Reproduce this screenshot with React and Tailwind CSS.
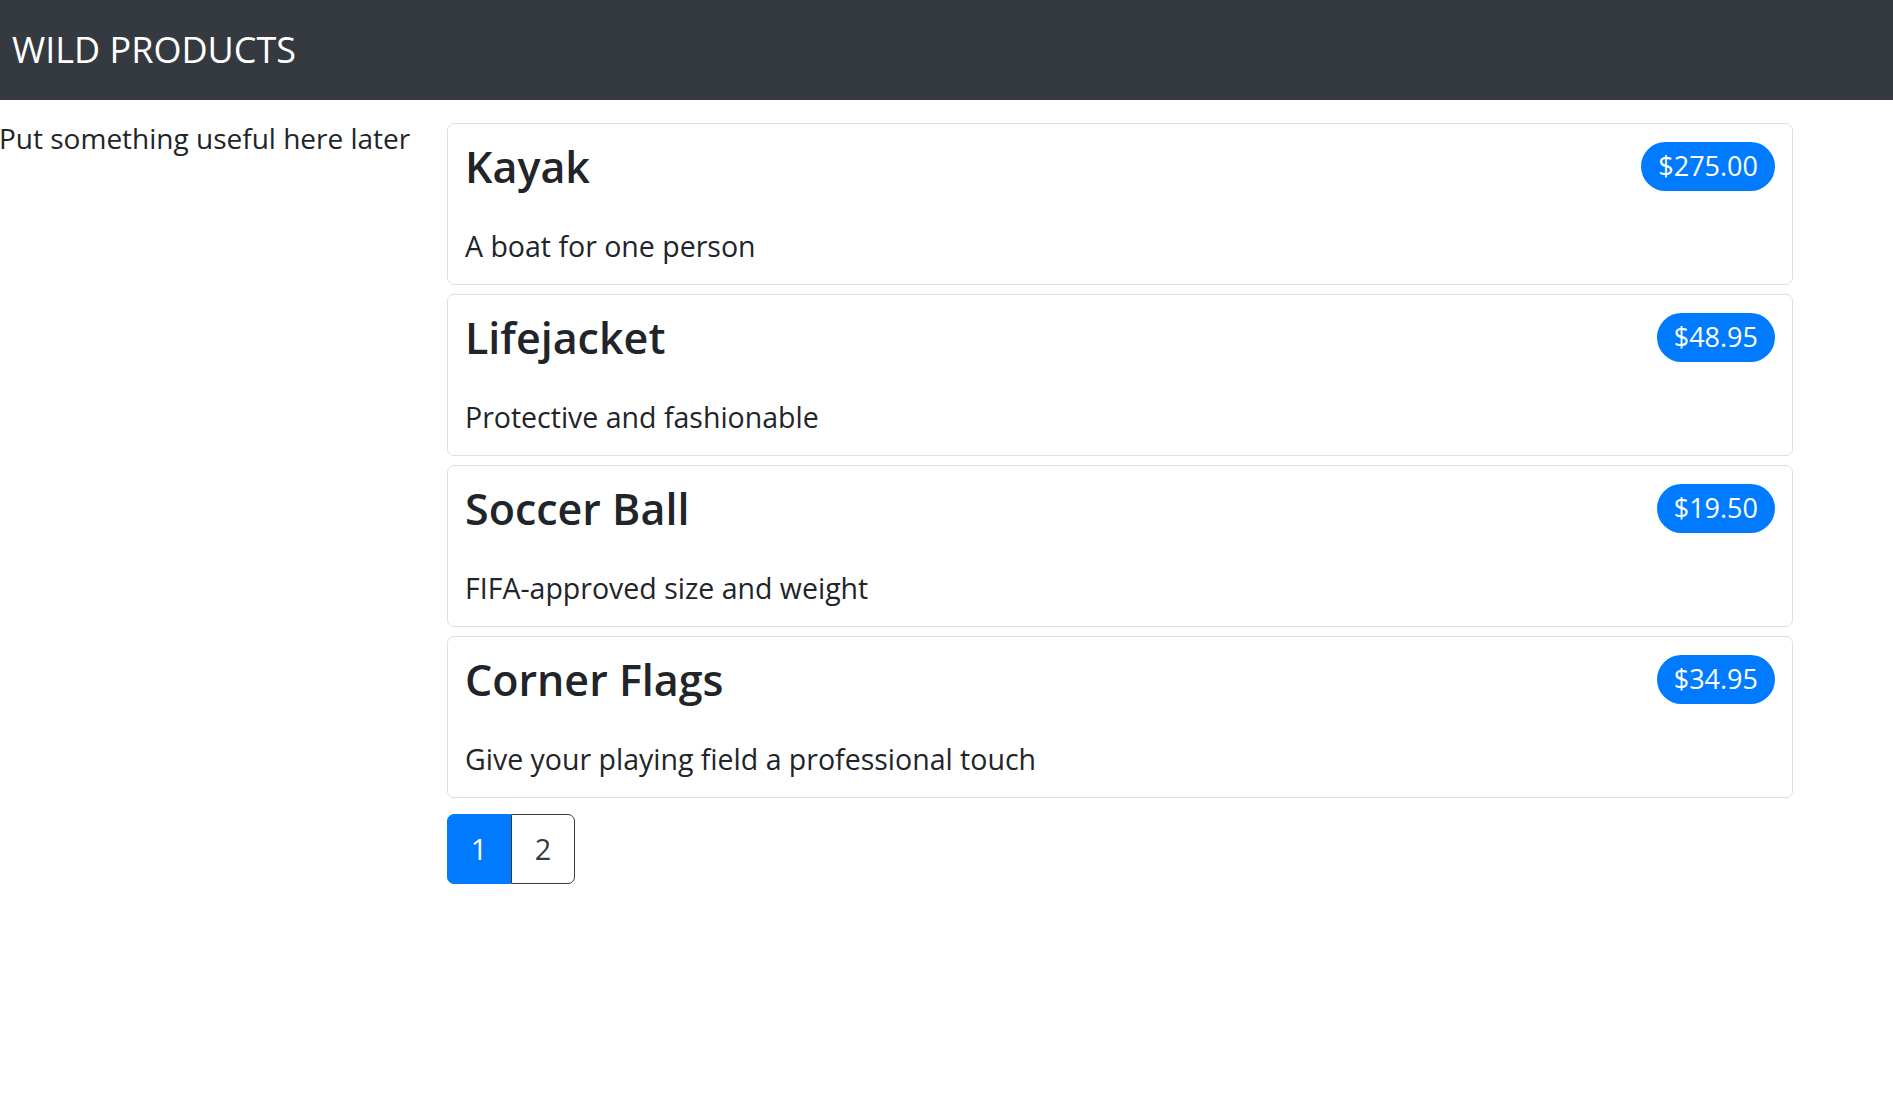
import React, { useState } from "react";

const products = [
  { id: 1, name: "Kayak", description: "A boat for one person", price: 275 },
  { id: 2, name: "Lifejacket", description: "Protective and fashionable", price: 48.95 },
  { id: 3, name: "Soccer Ball", description: "FIFA-approved size and weight", price: 19.5 },
  { id: 4, name: "Corner Flags", description: "Give your playing field a professional touch", price: 34.95 },
];

const ProductCard = ({ product }) => (
  <div className="border border-[#dfdfdf] rounded-[7px] px-[17px] pt-[17px] pb-[16px]">
    <div className="flex items-start justify-between">
      <h4 className="text-[43px] leading-[52px] font-semibold text-[#212529]">{product.name}</h4>
      <span className="h-[49px] mt-[1px] px-[17px] rounded-full bg-[#007bff] text-white text-[27px] flex items-center">
        ${product.price.toFixed(2)}
      </span>
    </div>
    <p className="mt-[32px] text-[28.5px] leading-[43px] text-[#212529]">{product.description}</p>
  </div>
);

export default function App() {
  const [page, setPage] = useState(1);

  return (
    <div className="min-h-screen bg-white text-[#212529]" style={{ fontFamily: '"Open Sans", "Noto Sans", sans-serif' }}>
      <div className="h-[100px] bg-[#343a40] flex items-center px-[12px]">
        <span className="text-white text-[36px]">WILD PRODUCTS</span>
      </div>
      <div className="flex pt-[17px]">
        <div className="w-[447px] shrink-0">
          <p className="text-[28px] leading-[43px] -ml-[1px]">Put something useful here later</p>
        </div>
        <div className="w-[1346px] mt-[6px]">
          <div className="flex flex-col gap-[9px]">
            {products.map((p) => (
              <ProductCard key={p.id} product={p} />
            ))}
          </div>
          <div className="flex mt-[16px]">
            {[1, 2].map((n) => (
              <button
                key={n}
                onClick={() => setPage(n)}
                className={`w-[64px] h-[70px] text-[28.8px] border ${
                  page === n
                    ? "bg-[#007bff] border-[#007bff] text-white"
                    : "bg-white border-[#343a40] text-[#343a40]"
                } ${n === 1 ? "rounded-l-[7px]" : "rounded-r-[7px]"}`}
              >
                {n}
              </button>
            ))}
          </div>
        </div>
      </div>
    </div>
  );
}
